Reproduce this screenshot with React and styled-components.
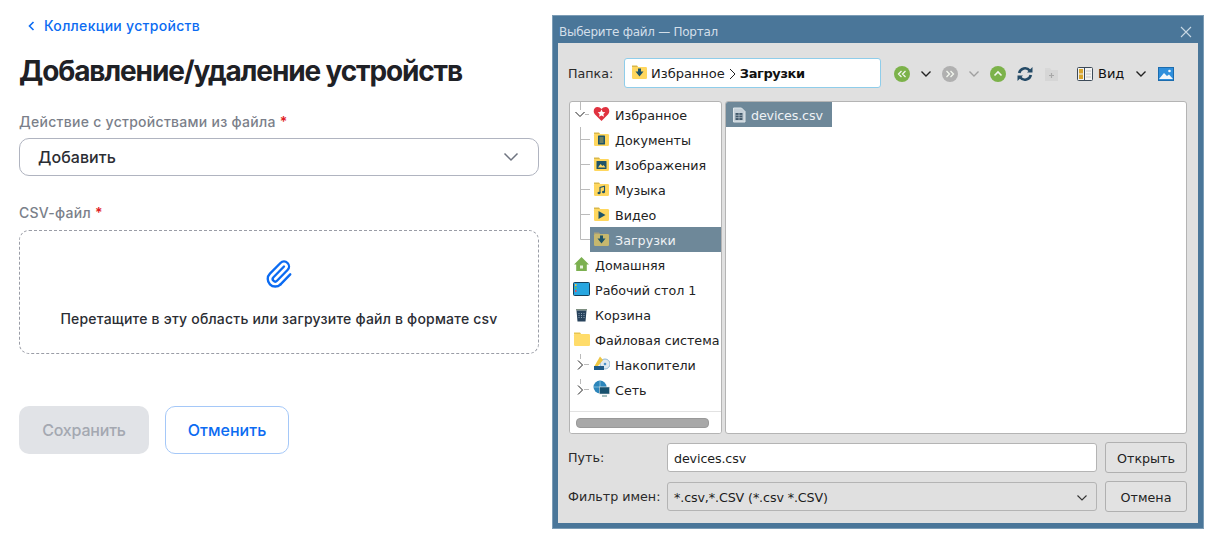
import React from "react";
import styled, { createGlobalStyle } from "styled-components";

const Global = createGlobalStyle`
  html, body { margin: 0; padding: 0; background: #fff; }
  body { font-family: Inter, "Liberation Sans", sans-serif; }
  * { box-sizing: border-box; }
`;

const Page = styled.div`
  width: 1216px; height: 546px; display: flex; overflow: hidden; padding: 15px 0 0 19px; background: #fff;
`;
const Form = styled.div`
  width: 520px; flex: none; display: flex; flex-direction: column;
`;
const Back = styled.a`
  display: flex; align-items: center; gap: 9px; padding-left: 9px; height: 22px;
  color: #0b6bf2; font: 500 14px/22px Inter, sans-serif; letter-spacing: .3px;
`;
const Title = styled.h1`
  margin: 12px 0 0; height: 44px; color: #1f2126; font: 700 28px/44px Inter, sans-serif; letter-spacing: -1.14px; white-space: nowrap;
`;
const Label = styled.div`
  margin-top: ${p => p.$top}px; height: 20px; color: #7b7f8a; font: 500 14px/20px Inter, sans-serif; letter-spacing: .28px;
  b { color: #e01b24; font-weight: 600; }
`;
const Select = styled.div`
  margin-top: ${p => p.$top}px; height: 38px; border: 1px solid #b0b4c0; border-radius: 10px; display: flex; align-items: center; justify-content: space-between;
  padding: 0 18px; color: #2b2d33; font: 500 16px/24px Inter, sans-serif; letter-spacing: .05px;
`;
const Drop = styled.div`
  margin-top: 7px; height: 124px; border: 1px dashed #9a9da6; border-radius: 10px; display: flex; flex-direction: column; align-items: center;
  padding-top: 28px; color: #2b2d33; font: 500 14px/20px Inter, sans-serif; letter-spacing: .2px;
`;
const DropText = styled.div` margin-top: 20px; `;
const Actions = styled.div` margin-top: 52px; display: flex; gap: 16px; `;
const Btn = styled.button`
  width: ${p => p.$w}px; height: 48px; border-radius: 10px; font: 500 16px/24px Inter, sans-serif; letter-spacing: ${p => p.$ghost ? ".05px" : "-.2px"}; padding: 0;
  background: ${p => p.$ghost ? "#fff" : "#e1e3e7"}; color: ${p => p.$ghost ? "#0b6bf2" : "#a4a8b1"};
  border: ${p => p.$ghost ? "1px solid #a5c8f8" : "none"};
`;

const Dialog = styled.div`
  width: 652px; height: 514px; margin-left: 13px; flex: none; background: #4a7699; border: 1px solid #7d9db6; display: flex; flex-direction: column;
  padding: 0 5px 5px; font: 12.7px/18px "DejaVu Sans", sans-serif; color: #1c1c1c;
`;
const TitleBar = styled.div`
  height: 27px; flex: none; display: flex; align-items: center; justify-content: space-between; color: #d3dfe9; padding: 4px 6px 0 1px; font-size: 12px; letter-spacing: -.27px;
`;
const Body = styled.div`
  flex: 1; background: #e0e0e0; padding: 0 10px; display: flex; flex-direction: column; min-height: 0;
`;
const ToolRow = styled.div`
  height: 58px; flex: none; display: flex; align-items: center; padding-top: 4px;
`;
const FieldLabel = styled.div` width: ${p => p.$w}px; flex: none; color: #2a2a2a; `;
const Crumb = styled.div`
  width: 257px; height: 30px; margin-top: -2px; flex: none; background: #fff; border: 1px solid #8fcdea; border-radius: 3px; display: flex; align-items: center; gap: 3px; padding: 2px 0 0 6px; font-size: 13px;
  b { font-weight: 700; color: #111; letter-spacing: -.4px; }
`;
const Tools = styled.div` display: flex; align-items: center; margin-left: 13px; height: 20px; `;
const ToolSlot = styled.span` display: inline-flex; align-items: center; justify-content: center; width: ${p => p.$w}px; flex: none; `;
const ViewText = styled.span` width: 39px; color: #111; flex: none; padding-left: 4px; font-size: 13px; `;
const Panes = styled.div` height: 333px; flex: none; display: flex; gap: 3px; margin: 0 1px; `;
const Pane = styled.div`
  background: #fff; border: 1px solid #b4b4b4; border-radius: 3px; position: relative; overflow: hidden;
  width: ${p => p.$w ? p.$w + "px" : "auto"}; flex: ${p => p.$w ? "none" : 1};
`;
const TreeRow = styled.div`
  height: 25px; display: flex; align-items: center; white-space: nowrap; color: #222;
`;
const Gutter = styled.svg` width: 20px; height: 25px; flex: none; display: block; fill: none; `;
const RowBody = styled.div`
  flex: 1; height: 25px; display: flex; align-items: center; gap: 1px; padding: 2px 0 0 ${p => p.$pad}px;
  background: ${p => p.$sel ? "#6e8899" : "transparent"}; color: ${p => p.$sel ? "#eef2f5" : "inherit"}; min-width: 0;
`;
const FileItem = styled.div`
  width: 106px; height: 25px; background: #6e8899; color: #eef2f5; display: flex; align-items: center; gap: 5px; padding: 2px 0 0 6px; letter-spacing: -.15px;
`;
const Scroll = styled.div`
  position: absolute; left: 0; right: 0; bottom: 0; height: 22px; border-top: 1px solid #e2e2e2; background: #fff;
  &::after { content: ""; position: absolute; left: 6px; top: 6px; width: 131px; height: 8px; border-radius: 4px; background: #a8a8a8; border: 1px solid #999; }
`;
const FormRow = styled.div`
  display: flex; align-items: center; margin-right: 1px; margin-top: ${p => p.$top}px; height: 31px;
`;
const Input = styled.div`
  width: 430px; height: 29px; flex: none; background: ${p => p.$combo ? "#e0e0e0" : "#fff"}; border: 1px solid #b4b4b4; border-radius: 3px;
  display: flex; align-items: center; justify-content: space-between; padding: 2px 7px 0 6px; letter-spacing: -.12px;
`;
const DlgBtn = styled.div`
  width: 82px; height: 31px; flex: none; margin-left: 8px; border: 1px solid #b0b0b0; border-radius: 3px; background: #e2e2e2; display: flex; align-items: center; justify-content: center; color: #222; padding-top: 2px;
`;

const Chevron = ({ size = 14, color = "#222", w = 1.4 }) => (
  <svg width={size} height={size} viewBox="0 0 14 14" fill="none" stroke={color} strokeWidth={w}><path d="M2.5 4.5 7 9l4.5-4.5" /></svg>
);

const Folder = ({ children, dim }) => (
  <svg width="17" height="16" viewBox="0 0 17 16" style={{ flex: "none", marginTop: -4 }}>
    <path d="M1 1.5h5l1.500 2H1z" fill={dim ? "#a8a07a" : "#d9b84a"} />
    <rect x="1" y="3" width="15" height="12" rx="1.2" fill={dim ? "#c6b76e" : "#ffd75e"} />
    {children}
  </svg>
);

const glyphs = {
  doc: <g><rect x="5" y="4.500" width="7" height="9" rx=".6" fill="#1f5468" /><path d="M6.500 7h4M6.500 9h4M6.500 11h4" stroke="#ffd75e" strokeWidth=".7" /></g>,
  img: <g><rect x="3.500" y="5" width="10" height="8" rx=".6" fill="#1f5468" /><path d="M5 11.500 7.500 8l2 2 1-1 2 2.500z" fill="#ffd75e" /></g>,
  music: <g fill="#1f5468"><path d="M7 12V6.500l4.500-1.300V11" stroke="#1f5468" strokeWidth="1.100" fill="none" /><ellipse cx="6" cy="12" rx="1.500" ry="1.200" /><ellipse cx="10.500" cy="11" rx="1.500" ry="1.200" /></g>,
  video: <path d="M5.500 5 12.500 9l-7 4z" fill="#1f5468" />,
  down: <path d="M7 4.500h3v3h2.500L8.500 12.500 4.500 7.500H7z" fill="#1f5468" />,
};

const Line = ({ kind }) => {
  if (kind === "openTop") return (
    <Gutter viewBox="0 0 20 25"><path d="M10.500 0v8" stroke="#bbb" /><path d="M5.500 10l4.500 4.500L14.500 10" stroke="#222" /><path d="M15 12.500h4" stroke="#bbb" /></Gutter>
  );
  if (kind === "closed") return (
    <Gutter viewBox="0 0 20 25"><path d="M10.500 2v5" stroke="#bbb" /><path d="M8 8.500l4.500 4.500L8 17.500" stroke="#222" /><path d="M14 12.500h5" stroke="#bbb" /></Gutter>
  );
  return (
    <Gutter viewBox="0 0 20 25"><path d={kind === "last" ? "M10.500 0v12.500H20" : "M10.500 0v25M10.500 12.500H20"} stroke="#bbb" /></Gutter>
  );
};

const Heart = () => (
  <svg width="17" height="16" viewBox="0 0 17 16" style={{ flex: "none", marginTop: -4 }}>
    <path d="M8.500 15 1.800 8.200C-.5 5.500 1 1 4.500 1c1.700 0 3 .8 4 2 1-1.200 2.300-2 4-2 3.500 0 5 4.500 2.700 7.200z" fill="#e0323f" />
    <path d="m8.500 3.500 1.200 2.500 2.600.3-1.900 1.800.5 2.600-2.400-1.300-2.400 1.300.5-2.600L4.700 6.300 7.300 6z" fill="#fff" />
  </svg>
);
const Home = () => (
  <svg width="17" height="16" viewBox="0 0 17 16" style={{ flex: "none", marginTop: -3 }}>
    <path d="M8.500 1 16 8.500h-2.200V15H3.200V8.500H1z" fill="#7cb050" />
    <rect x="7" y="9.500" width="3" height="3" fill="#e8f2df" />
  </svg>
);
const Desk = () => (
  <svg width="17" height="14" viewBox="0 0 17 14" style={{ flex: "none", marginTop: -4 }}>
    <rect x=".5" y=".5" width="16" height="13" rx="1" fill="#27a6e0" stroke="#15405a" />
    <rect x="2" y="2" width="1.500" height="2" fill="#f0c23c" /><rect x="2" y="5" width="1.500" height="2" fill="#6fbf4a" /><rect x="2" y="8" width="1.500" height="2" fill="#e0525c" />
  </svg>
);
const Trash = () => (
  <svg width="17" height="16" viewBox="0 0 17 16" style={{ flex: "none", marginTop: -1 }}>
    <path d="M3 2h11v1.500H3z" fill="#7d8f80" />
    <path d="M3.500 3.500h10l-1 11h-8z" fill="#27425c" />
    <path d="M6 6v6M8.500 6v6M11 6v6" stroke="#8aa0b4" strokeDasharray="1 1" />
  </svg>
);
const PlainFolder = () => (
  <svg width="17" height="16" viewBox="0 0 17 16" style={{ flex: "none", marginTop: -4 }}>
    <path d="M1 1.500h6l1.500 2H1z" fill="#e8c650" /><rect x="1" y="3" width="16" height="12" rx="1.200" fill="#ffdc6a" />
  </svg>
);
const Drives = () => (
  <svg width="17" height="18" viewBox="0 0 17 18" style={{ flex: "none", marginTop: -3 }}>
    <circle cx="12" cy="9" r="5" fill="#dfe8ef" stroke="#8fb6d4" /><circle cx="12" cy="9" r="1.300" fill="#4d93c9" />
    <path d="M7 1.500 10 5l-5 6H1.500z" fill="#eec743" />
    <rect x="1" y="11" width="10" height="4" fill="#1d5a88" />
  </svg>
);
const Net = () => (
  <svg width="17" height="18" viewBox="0 0 17 18" style={{ flex: "none", marginTop: -3 }}>
    <circle cx="7" cy="7" r="6.500" fill="#2c86bb" />
    <path d="M1 7h12M7 .5v13" stroke="#9fd0ea" strokeWidth=".7" />
    <rect x="6.500" y="7" width="10" height="7" fill="#17516e" stroke="#e0e0e0" strokeWidth=".5" />
    <path d="M9 16h5" stroke="#8aa" strokeWidth="1.500" />
  </svg>
);

const Round = ({ fill, d, sw = 1.300 }) => (
  <svg width="16" height="16" viewBox="0 0 16 16" fill="none">
    <circle cx="8" cy="8" r="8" fill={fill} />
    <path d={d} stroke="#f2f6ee" strokeWidth={sw} />
  </svg>
);
const Refresh = () => (
  <svg width="16" height="16" viewBox="0 0 16 16" fill="none" stroke="#244a66" strokeWidth="2.700">
    <path d="M2.200 7a6 6 0 0 1 10.500-2.500" /><path d="M13.800 9a6 6 0 0 1-10.500 2.500" />
    <path d="M15.500 1v5.500H10z" fill="#244a66" stroke="none" /><path d="M.5 15V9.500H6z" fill="#244a66" stroke="none" />
  </svg>
);
const NewFolder = () => (
  <svg width="14" height="15" viewBox="0 0 14 15">
    <path d="M1 1h5l1.500 2H1z" fill="#d8d8d8" /><rect x="1" y="3" width="13" height="11" fill="#d6d6d6" />
    <path d="M7.500 6v5M5 8.500h5" stroke="#a8a8a8" strokeWidth="1.200" />
  </svg>
);
const ViewIcon = () => (
  <svg width="16" height="14" viewBox="0 0 16 14">
    <rect x=".5" y=".5" width="15" height="13" rx="1" fill="#f2f2f2" stroke="#3c4a58" />
    <rect x="2" y="2" width="4" height="4.500" fill="#d9a52c" /><rect x="2" y="7.500" width="4" height="4.500" fill="#d9a52c" />
    <path d="M7.500 1v12" stroke="#3c4a58" /><path d="M9 4h5M9 7h5M9 10h5" stroke="#c4c4c4" />
  </svg>
);
const Preview = () => (
  <svg width="16" height="14" viewBox="0 0 16 14">
    <rect x=".5" y=".5" width="15" height="13" fill="#2f8fdc" stroke="#1c6cae" />
    <path d="M1 12 6 6l3 3 2-1.500 4 4.500z" fill="#f2f7fb" /><circle cx="11.500" cy="4" r="1.300" fill="#f2f7fb" />
  </svg>
);

const treeA = [
  ["Документы", "doc"], ["Изображения", "img"], ["Музыка", "music"], ["Видео", "video"],
];

export default function App() {
  return (
    <Page>
      <Global />
      <Form>
        <Back>
          <svg width="7" height="10" viewBox="0 0 7 10" fill="none" stroke="#0b6bf2" strokeWidth="1.600"><path d="M5.500 1 1.500 5l4 4" /></svg>
          Коллекции устройств
        </Back>
        <Title>Добавление/удаление устройств</Title>
        <Label $top={19}>Действие с устройствами из файла <b>*</b></Label>
        <Select $top={6}>Добавить<svg width="18" height="18" viewBox="0 0 18 18" fill="none" stroke="#6f7480" strokeWidth="1.500"><path d="M2.500 5.500 9 12l6.500-6.500" /></svg></Select>
        <Label $top={27}>CSV-файл <b>*</b></Label>
        <Drop>
          <svg width="30" height="30" viewBox="0 0 24 24" fill="none" stroke="#0b6bf2" strokeWidth="1.900" strokeLinecap="round" strokeLinejoin="round">
            <path d="M13.234 20.252 21 12.300" />
            <path d="m16 6-8.414 8.586a2 2 0 0 0 0 2.828 2 2 0 0 0 2.828 0l8.414-8.586a4 4 0 0 0 0-5.656 4 4 0 0 0-5.656 0l-8.415 8.585a6 6 0 1 0 8.486 8.486" />
          </svg>
          <DropText>Перетащите в эту область или загрузите файл в формате csv</DropText>
        </Drop>
        <Actions>
          <Btn $w={130}>Сохранить</Btn>
          <Btn $w={124} $ghost>Отменить</Btn>
        </Actions>
      </Form>
      <Dialog>
        <TitleBar>
          Выберите файл — Портал
          <svg width="12" height="12" viewBox="0 0 12 12" stroke="#c9d8e4" strokeWidth="1.100"><path d="M1 1l10 10M11 1 1 11" /></svg>
        </TitleBar>
        <Body>
          <ToolRow>
            <FieldLabel $w={56}>Папка:</FieldLabel>
            <Crumb>
              <Folder>{glyphs.down}</Folder>
              <span>Избранное</span>
              <svg width="9" height="12" viewBox="0 0 9 12" fill="none" stroke="#222" strokeWidth="1"><path d="M2 1l5 5-5 5" /></svg>
              <b>Загрузки</b>
            </Crumb>
            <Tools>
              <ToolSlot $w={16}><Round fill="#7cb24a" d="M7.500 5 4.500 8l3 3M11.500 5l-3 3 3 3" /></ToolSlot>
              <ToolSlot $w={32}><Chevron /></ToolSlot>
              <ToolSlot $w={16}><Round fill="#b0b0b0" d="M4.500 5l3 3-3 3M8.500 5l3 3-3 3" /></ToolSlot>
              <ToolSlot $w={32}><Chevron color="#a0a0a0" /></ToolSlot>
              <ToolSlot $w={16}><Round fill="#7cb24a" d="M4.500 9.500 8 6l3.500 3.500" sw={1.600} /></ToolSlot>
              <ToolSlot $w={38}><Refresh /></ToolSlot>
              <ToolSlot $w={14}><NewFolder /></ToolSlot>
              <ToolSlot $w={18} />
              <ToolSlot $w={18}><ViewIcon /></ToolSlot>
              <ViewText>Вид</ViewText>
              <ToolSlot $w={16}><Chevron /></ToolSlot>
              <ToolSlot $w={34}><Preview /></ToolSlot>
            </Tools>
          </ToolRow>
          <Panes>
            <Pane $w={153}>
              <TreeRow><Line kind="openTop" /><RowBody $pad={3}><Heart />&nbsp;Избранное</RowBody></TreeRow>
              {treeA.map(([t, g]) => (
                <TreeRow key={t}><Line /><RowBody $pad={3}><Folder>{glyphs[g]}</Folder>&nbsp;{t}</RowBody></TreeRow>
              ))}
              <TreeRow><Line kind="last" /><RowBody $pad={3} $sel><Folder dim>{glyphs.down}</Folder>&nbsp;Загрузки</RowBody></TreeRow>
              <TreeRow><RowBody $pad={3}><Home />&nbsp;Домашняя</RowBody></TreeRow>
              <TreeRow><RowBody $pad={3}><Desk />&nbsp;Рабочий стол 1</RowBody></TreeRow>
              <TreeRow><RowBody $pad={3}><Trash />&nbsp;Корзина</RowBody></TreeRow>
              <TreeRow><RowBody $pad={3}><PlainFolder />&nbsp;Файловая система</RowBody></TreeRow>
              <TreeRow><Line kind="closed" /><RowBody $pad={3}><Drives />&nbsp;Накопители</RowBody></TreeRow>
              <TreeRow><Line kind="closed" /><RowBody $pad={3}><Net />&nbsp;Сеть</RowBody></TreeRow>
              <Scroll />
            </Pane>
            <Pane>
              <FileItem>
                <svg width="14" height="16" viewBox="0 0 14 16" style={{ flex: "none", marginTop: -2 }}>
                  <path d="M1.500 1h8L13 4.500V15H1.500z" fill="#c5d0d8" stroke="#dfe6ea" />
                  <rect x="3.500" y="6" width="7" height="7" fill="#41586a" />
                  <path d="M3.500 8.300h7M3.500 10.600h7M7 6v7" stroke="#c5d0d8" strokeWidth=".6" />
                </svg>
                devices.csv
              </FileItem>
            </Pane>
          </Panes>
          <FormRow $top={8}>
            <FieldLabel $w={99}>Путь:</FieldLabel>
            <Input>devices.csv</Input>
            <DlgBtn>Открыть</DlgBtn>
          </FormRow>
          <FormRow $top={8}>
            <FieldLabel $w={99}>Фильтр имен:</FieldLabel>
            <Input $combo>*.csv,*.CSV (*.csv *.CSV)<Chevron color="#333" w={1.100} /></Input>
            <DlgBtn>Отмена</DlgBtn>
          </FormRow>
        </Body>
      </Dialog>
    </Page>
  );
}
